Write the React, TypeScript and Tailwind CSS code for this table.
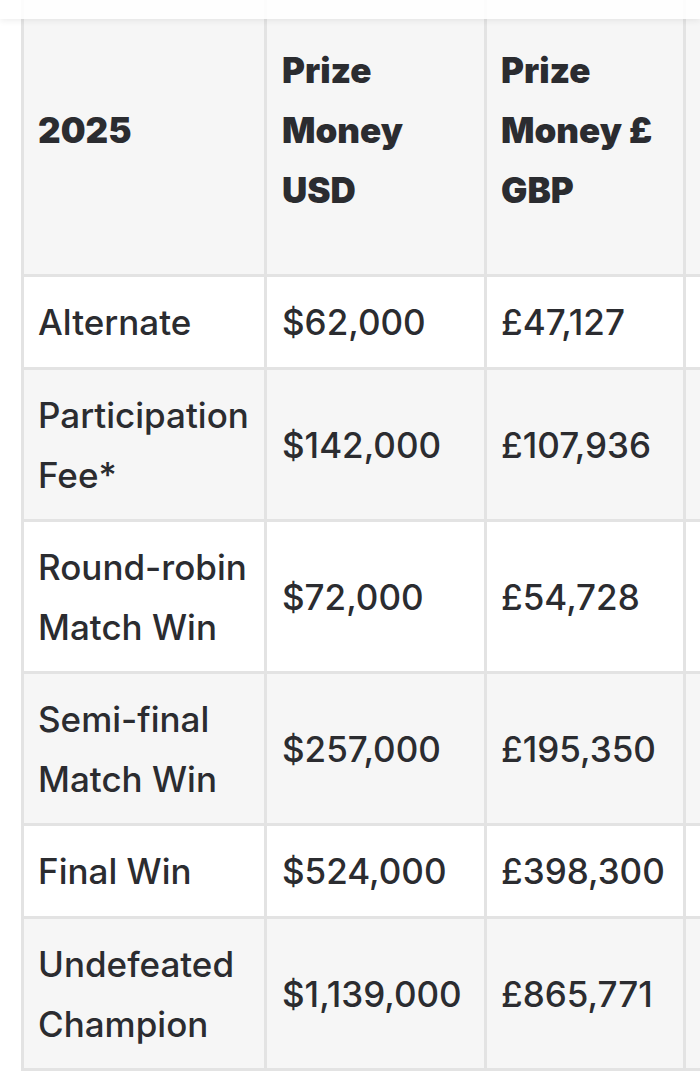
import React from "react";

type Row = { label: React.ReactNode; usd: string; gbp: string; gray: boolean; double: boolean };

const rows: Row[] = [
  { label: "Alternate", usd: "$62,000", gbp: "£47,127", gray: false, double: false },
  { label: <>Participation<br />Fee*</>, usd: "$142,000", gbp: "£107,936", gray: true, double: true },
  { label: <>Round-robin<br />Match Win</>, usd: "$72,000", gbp: "£54,728", gray: false, double: true },
  { label: <>Semi-final<br />Match Win</>, usd: "$257,000", gbp: "£195,350", gray: true, double: true },
  { label: "Final Win", usd: "$524,000", gbp: "£398,300", gray: false, double: false },
  { label: <>Undefeated<br />Champion</>, usd: "$1,139,000", gbp: "£865,771", gray: true, double: true },
];

function Cell({
  children,
  gray,
  pl,
  bold,
  h,
}: {
  children?: React.ReactNode;
  gray: boolean;
  pl: string;
  bold?: boolean;
  h: string;
}) {
  return (
    <div
      className={`flex items-center pr-[6px] ${h} ${pl} ${gray ? "bg-[#f6f6f6]" : "bg-white"} ${
        bold ? "font-black" : "font-medium"
      } whitespace-nowrap`}
    >
      <div>{children}</div>
    </div>
  );
}

export default function App() {
  return (
    <div
      className="relative w-[700px] h-[1092px] overflow-hidden bg-white text-[#2b2c30] text-[35px] leading-[60px]"
      style={{ fontFamily: "Inter, 'Noto Sans', sans-serif" }}
    >
      <div className="absolute top-0 left-0 right-0 h-[19px] bg-white/90 z-10 shadow-[0_2px_6px_rgba(0,0,0,0.07)]" />
      <div className="ml-[21px] mt-[-17px] w-max">
        <div className="grid grid-cols-[240px_217px_196px_230px] gap-[3px] bg-[#e3e3e3] p-[3px]">
          <Cell gray pl="pl-[14px]" bold h="h-[288px]">2025</Cell>
          <Cell gray pl="pl-[15px]" bold h="h-[288px]">Prize<br />Money<br />USD</Cell>
          <Cell gray pl="pl-[14px]" bold h="h-[288px]">Prize<br />Money £<br />GBP</Cell>
          <Cell gray pl="pl-[14px]" bold h="h-[288px]" />
          {rows.map((r, i) => {
            const h = r.double ? "h-[149px]" : "h-[90px]";
            return (
              <React.Fragment key={i}>
                <Cell gray={r.gray} pl="pl-[14px]" h={h}>{r.label}</Cell>
                <Cell gray={r.gray} pl="pl-[15px]" h={h}>{r.usd}</Cell>
                <Cell gray={r.gray} pl="pl-[14px]" h={h}>{r.gbp}</Cell>
                <Cell gray={r.gray} pl="pl-[14px]" h={h} />
              </React.Fragment>
            );
          })}
        </div>
      </div>
    </div>
  );
}
